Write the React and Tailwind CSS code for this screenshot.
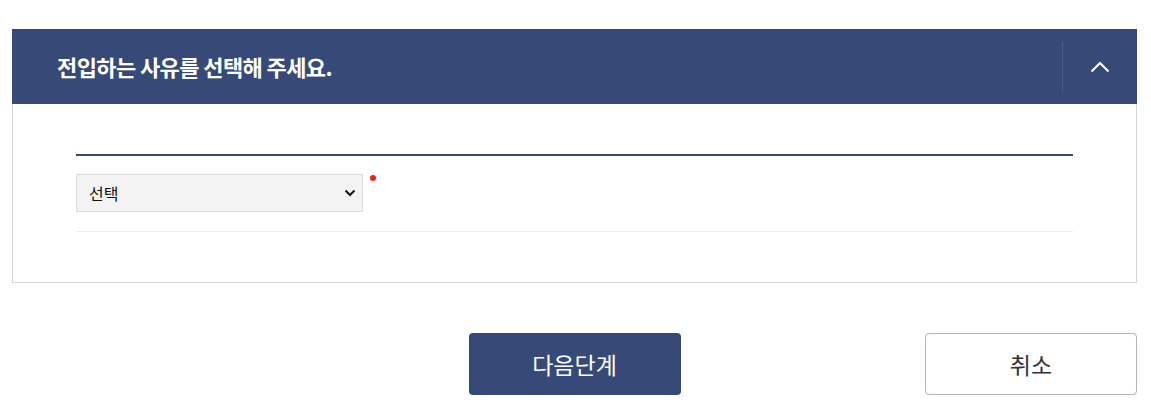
import React from 'react';

const font = { fontFamily: '"Noto Sans CJK KR", "Noto Sans", sans-serif' };

const App = () => {
  return (
    <div className="w-[1151px] h-[420px] bg-white pt-[29px] pl-[12px] pr-[14px]" style={font}>
      {/* accordion */}
      <div>
        <div className="flex h-[75px] items-center bg-[#374a77]">
          <h2 className="flex-1 pl-[45px] text-[22px] font-bold tracking-[-0.6px] text-white">
            전입하는 사유를 선택해 주세요.
          </h2>
          <div className="h-[50px] w-px bg-[#4a5d88]" />
          <button className="flex h-full w-[74px] items-center justify-center">
            <svg width="20" height="12" viewBox="0 0 20 12" fill="none">
              <path d="M1.5 10.5 L10 2 L18.5 10.5" stroke="white" strokeWidth="2" />
            </svg>
          </button>
        </div>
        <div className="h-[179px] border border-t-0 border-[#d6d6d6] px-[63px] pt-[50px]">
          <div className="border-t-2 border-[#374a77]" />
          <div className="flex items-start border-b border-[#ececec] pt-[18px] pb-[19px]">
            <div className="flex h-[38px] w-[287px] items-center justify-between border border-[#dcdcdc] bg-[#f3f3f3] pl-[12px] pr-[6px]">
              <span className="text-[16px] text-[#111]">선택</span>
              <svg width="12" height="8" viewBox="0 0 12 8" fill="none">
                <path d="M1.5 1.5 L6 6 L10.5 1.5" stroke="#111" strokeWidth="2" />
              </svg>
            </div>
            <span className="ml-[7px] mt-[1px] h-[6px] w-[6px] rounded-full bg-[#e8231f]" />
          </div>
        </div>
      </div>

      {/* buttons */}
      <div className="mt-[50px] grid grid-cols-[1fr_212px_1fr]">
        <div />
        <button className="h-[62px] rounded-[4px] bg-[#374a77] text-[23px] text-white">다음단계</button>
        <div className="flex justify-end">
          <button className="h-[62px] w-[212px] rounded-[4px] border border-[#b5b5b5] bg-white text-[23px] text-[#333]">
            취소
          </button>
        </div>
      </div>
    </div>
  );
};

export default App;
